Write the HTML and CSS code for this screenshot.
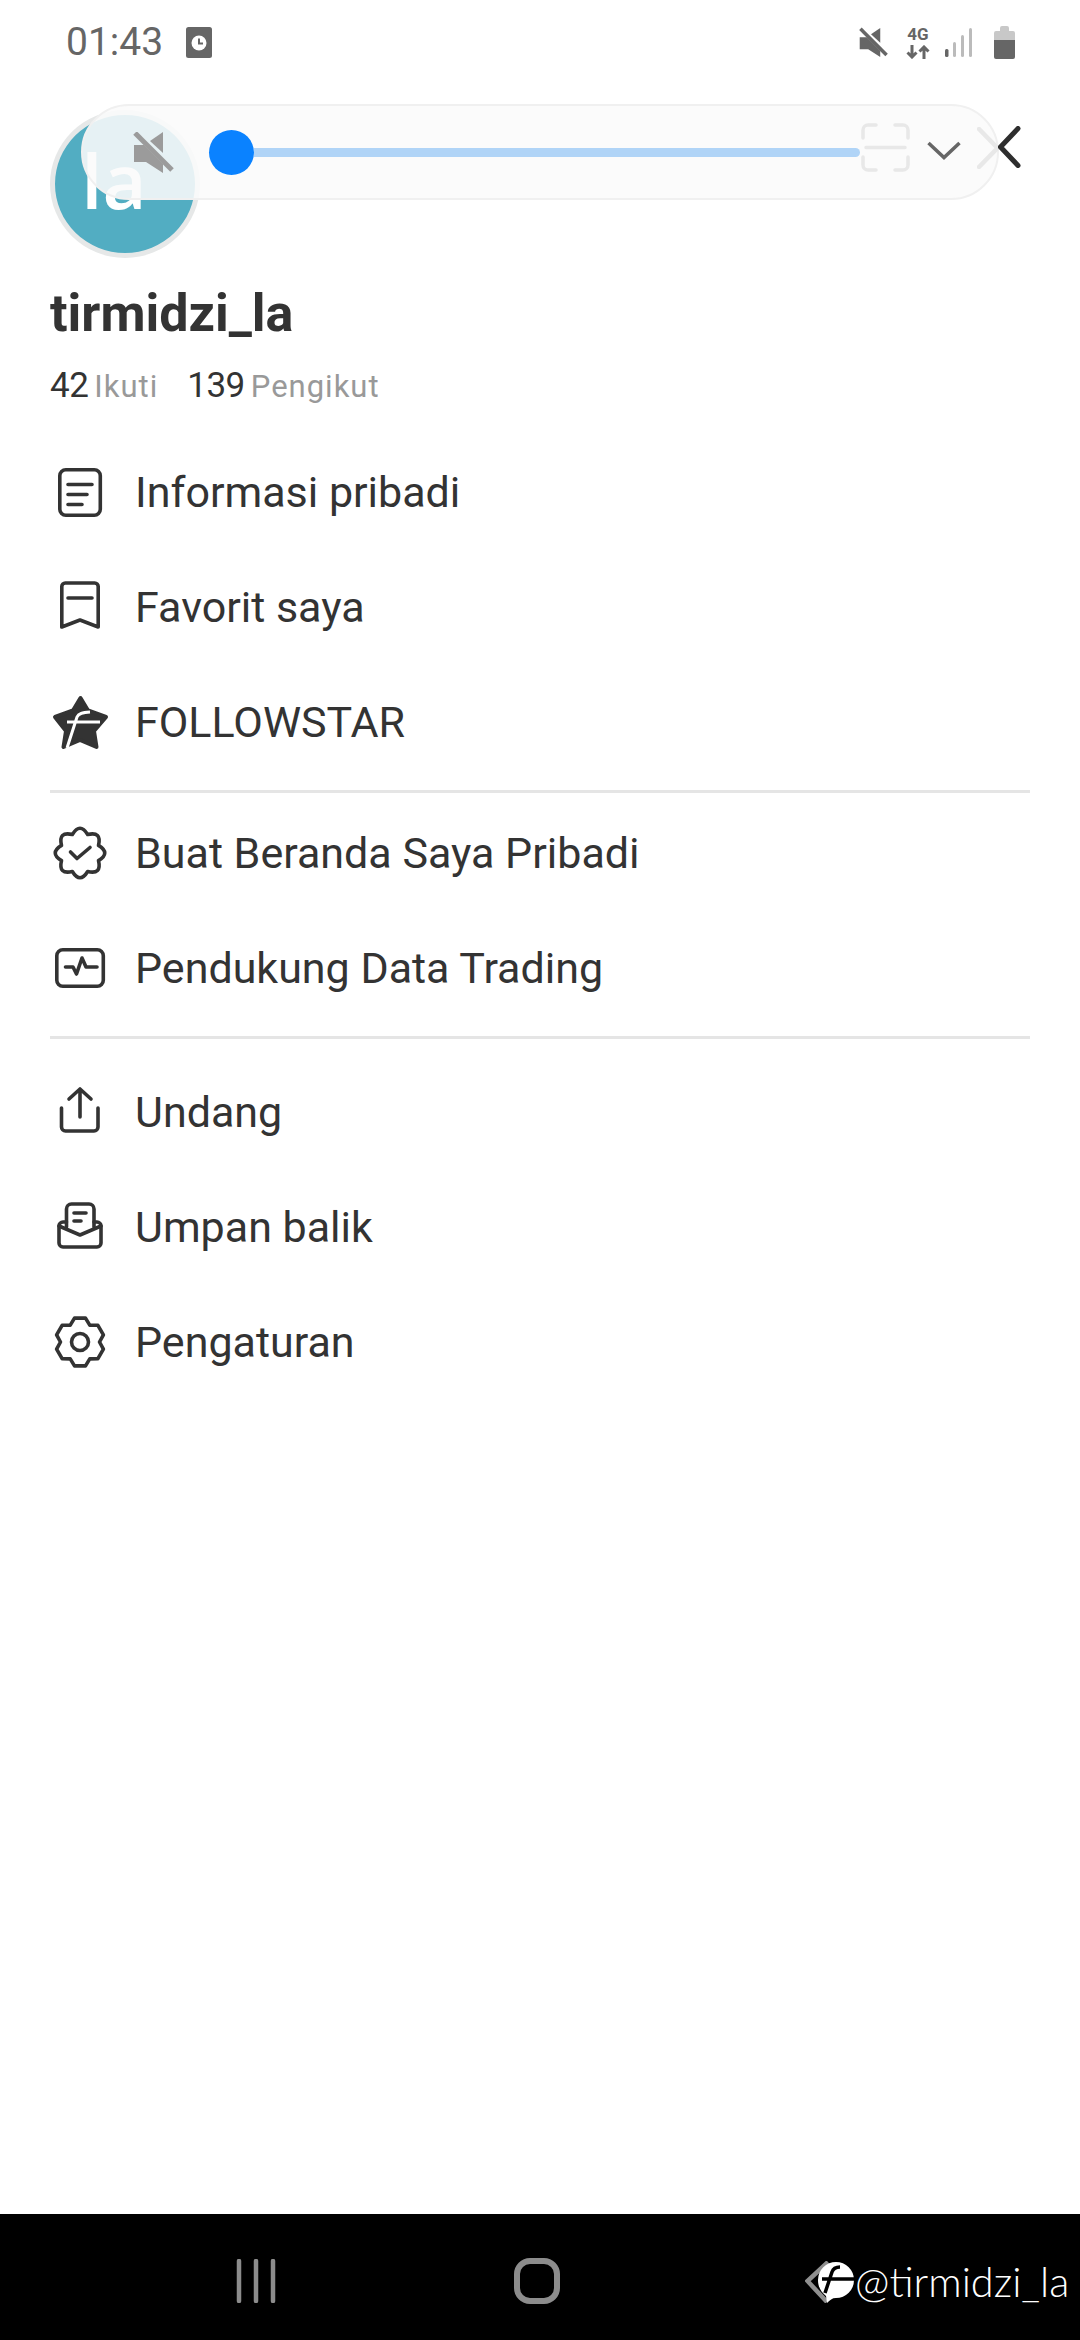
FILE: index.html
```html
<!DOCTYPE html>
<html lang="id">
<head>
<meta charset="utf-8">
<title>tirmidzi_la</title>
<link rel="stylesheet" href="styles.css">
</head>
<body>
<div class="app">
  <header class="status">
    <div class="status-left">
      <span class="time">01:43</span>
      <svg class="clock-box" viewBox="0 0 26 31"><rect width="26" height="31" rx="2.5" fill="#666"/><circle cx="13" cy="16" r="7.5" fill="#fff"/><path d="M13 11.500V16.500H17" fill="none" stroke="#666" stroke-width="2"/></svg>
    </div>
    <div class="status-right">
      <svg class="st-mute" viewBox="0 0 41 41"><path d="M1 13H11L30 32V41L13 30H1Z" fill="#666"/><path d="M17 9 30 0V21Z" fill="#666"/><path d="M2 1 39 38" stroke="#666" stroke-width="5"/></svg>
      <div class="net">
        <span class="net-label">4G</span>
        <svg class="net-arrows" viewBox="0 0 24 14"><path d="M6 0V12M1.500 7.500 6 12 10.500 7.500M18 14V2M13.500 6.500 18 2 22.500 6.500" fill="none" stroke="#666" stroke-width="3"/></svg>
      </div>
      <svg class="signal" viewBox="0 0 27 29"><rect x="0" y="21" width="3.500" height="8" rx="1.500" fill="#666"/><rect x="8" y="14" width="3" height="15" rx="1.500" fill="#bbb"/><rect x="16" y="7" width="3" height="22" rx="1.500" fill="#bbb"/><rect x="24" y="0" width="3" height="29" rx="1.500" fill="#bbb"/></svg>
      <svg class="battery" viewBox="0 0 21 33"><path d="M6 2a2 2 0 0 1 2-2h5a2 2 0 0 1 2 2v3h4a2 2 0 0 1 2 2v7H0V7a2 2 0 0 1 2-2h4Z" fill="#c8c8c8"/><path d="M0 14H21V31a2 2 0 0 1-2 2H2a2 2 0 0 1-2-2Z" fill="#666"/></svg>
    </div>
  </header>

  <main class="content">
    <section class="hero">
      <div class="avatar"><span class="avatar-text">la</span></div>
      <h1 class="name">tirmidzi_la</h1>
      <div class="stats">
        <span class="count">42</span><span class="stat-label">Ikuti</span>
        <span class="count count-second">139</span><span class="stat-label">Pengikut</span>
      </div>

      <div class="player">
        <svg class="pl-mute" viewBox="0 0 41 41"><path d="M1 13H11L30 32V41L13 30H1Z" fill="#9b9b9b"/><path d="M17 9 30 0V21Z" fill="#9b9b9b"/><path d="M2 1 39 38" stroke="#9b9b9b" stroke-width="5"/></svg>
        <div class="slider"><span class="thumb"></span><span class="track"></span></div>
        <svg class="pl-scan" viewBox="0 0 49 49"><path d="M2 15V7a5 5 0 0 1 5-5h8M34 2h8a5 5 0 0 1 5 5v8M2 34v8a5 5 0 0 0 5 5h8M34 47h8a5 5 0 0 0 5-5v-8M5 24.500H44" fill="none" stroke="#e8e8e8" stroke-width="3.500" stroke-linecap="round"/></svg>
        <svg class="pl-chev" viewBox="0 0 34 19"><path d="M1.500 2 17 16.500 32.500 2" fill="none" stroke="#666" stroke-width="3.500"/></svg>
        <svg class="pl-close" viewBox="0 0 22 42"><path d="M2 2 20.500 21 2 40" fill="none" stroke="#e8e8e8" stroke-width="4.500" stroke-linecap="round"/></svg>
      </div>
      <svg class="back" viewBox="0 0 23 42"><path d="M20 2.500 2.500 21 20 39.500" fill="none" stroke="#2e2e2e" stroke-width="5" stroke-linecap="round"/></svg>
    </section>

    <ul class="menu">
      <li class="row">
        <svg class="ico" viewBox="0 0 64 64"><rect x="11.800" y="9.800" width="40.500" height="45.500" rx="6"/><path d="M20 24.500H44M20 34.500H39M20 44.500H34"/></svg>
        <span class="label">Informasi pribadi</span>
      </li>
      <li class="row">
        <svg class="ico" viewBox="0 0 64 64"><path d="M13.800 11.500a3.500 3.500 0 0 1 3.500-3.500H46.700a3.500 3.500 0 0 1 3.500 3.500V52L32 45 13.800 52Z"/><path d="M20 23H44"/></svg>
        <span class="label">Favorit saya</span>
      </li>
      <li class="row">
        <svg class="ico" viewBox="0 0 64 64"><path class="solid" d="M32.500 8 40 20.500 58 27 46 41 48.500 57 32 50 15.500 57 18 41 7 27 25 20.500Z"/><path class="cut" d="M19 58 29 27C30.500 23.500 34 22.500 42 22M19 32H52"/></svg>
        <span class="label">FOLLOWSTAR</span>
      </li>
    </ul>
    <hr class="rule">
    <ul class="menu">
      <li class="row">
        <svg class="ico" viewBox="0 0 64 64"><path d="M24.350 13.500Q32 1 39.650 13.500 53.900 10.100 50.500 24.350 63 32 50.500 39.650 53.900 53.900 39.650 50.500 32 63 24.350 50.500 10.100 53.900 13.500 39.650 1 32 13.500 24.350 10.100 10.100 24.350 13.500Z"/><path d="M22.500 31 29 37.500 42 26.500"/></svg>
        <span class="label">Buat Beranda Saya Pribadi</span>
      </li>
      <li class="row">
        <svg class="ico" viewBox="0 0 64 64"><rect x="8.800" y="13.800" width="46.500" height="36.500" rx="6"/><path d="M17.500 31H25L28.500 38 34 22 38 31H49"/></svg>
        <span class="label">Pendukung Data Trading</span>
      </li>
    </ul>
    <hr class="rule rule-second">
    <ul class="menu">
      <li class="row">
        <svg class="ico" viewBox="0 0 64 64"><path d="M13.500 28V47a4 4 0 0 0 4 4H46a4 4 0 0 0 4-4V28"/><path d="M32 9V37M21 19 32 9 43 19"/></svg>
        <span class="label">Undang</span>
      </li>
      <li class="row">
        <svg class="ico" viewBox="0 0 64 64"><path d="M18.500 32V14a5 5 0 0 1 5-5H41a5 5 0 0 1 5 5V32"/><path d="M18.500 27H15a4 4 0 0 0-4 4V48a4 4 0 0 0 4 4H49a4 4 0 0 0 4-4V31a4 4 0 0 0-4-4H46"/><path d="M11 31 32 40 53 31M26 18H38M26 26H33"/></svg>
        <span class="label">Umpan balik</span>
      </li>
      <li class="row">
        <svg class="ico" viewBox="0 0 64 64"><path d="M37.500 8.100 41.750 15.100 49.900 15.300 55.400 24.800 51.500 32 55.400 39.200 49.900 48.700 41.750 48.900 37.500 55.900H26.500L22.250 48.900 14.100 48.700 8.600 39.200 12.500 32 8.600 24.800 14.100 15.300 22.250 15.100 26.500 8.100Z"/><circle cx="32" cy="32" r="8.500"/></svg>
        <span class="label">Pengaturan</span>
      </li>
    </ul>
  </main>

  <footer class="nav">
    <svg class="nav-recent" viewBox="0 0 40 44"><path d="M3 2V42M20 2V42M37 2V42" stroke="#8c8c8c" stroke-width="4.500" stroke-linecap="round"/></svg>
    <svg class="nav-home" viewBox="0 0 46 46"><rect x="3" y="3" width="40" height="40" rx="13" fill="none" stroke="#8c8c8c" stroke-width="6"/></svg>
    <div class="mark">
      <svg class="mark-logo" viewBox="0 0 49 42"><path d="M23 1 2.500 20 22 41" fill="none" stroke="#8f8f8f" stroke-width="4.500"/><path d="M31 1A18 18 0 0 1 31 37C27 37 25 39 22 42L21 35C16 31 13 26 13 19A18 18 0 0 1 31 1Z" fill="#fff"/><path d="M20 32 27 11C28 8 31 6 35 6M17 18H49" fill="none" stroke="#000" stroke-width="3.500"/></svg>
      <span class="mark-text">@tirmidzi_la</span>
    </div>
  </footer>
</div>
</body>
</html>
```
FILE: styles.css
```css
* { box-sizing: border-box; }
html, body { margin: 0; padding: 0; background: #fff; }
body { font-family: Roboto, "Liberation Sans", sans-serif; color: #333; }
.app { width: 1080px; height: 2340px; display: flex; flex-direction: column; overflow: hidden; }

.status { height: 84px; flex: none; display: flex; justify-content: space-between; align-items: center; padding: 0 65px 0 66px; }
.status-left { display: flex; align-items: center; gap: 23px; }
.time { font-size: 39px; line-height: 44px; color: #666; }
.clock-box { width: 26px; height: 31px; }
.status-right { display: flex; align-items: center; }
.st-mute { width: 29px; height: 31px; }
.net { width: 24px; margin-left: 18px; display: flex; flex-direction: column; align-items: center; }
.net-label { font-size: 17px; line-height: 17px; font-weight: 700; color: #666; }
.net-arrows { width: 24px; height: 14px; margin-top: 2px; }
.signal { width: 27px; height: 29px; margin-left: 15px; }
.battery { width: 21px; height: 33px; margin-left: 22px; }

.content { flex: 1; min-height: 0; }
.hero { position: relative; padding: 26px 0 0 50px; }
.avatar { width: 150px; height: 148px; border-radius: 50%; border: 5px solid #e6e8e8; background: #52adc2; display: flex; align-items: center; justify-content: center; padding: 0 22px 8px 0; }
.avatar-text { font-family: "Open Sans", sans-serif; font-weight: 600; font-size: 76px; line-height: 80px; color: #fff; }
.name { margin: 26px 0 0; font-size: 52px; line-height: 60px; font-weight: 700; color: #333; }
.stats { display: flex; align-items: baseline; margin-top: 22px; height: 40px; }
.count { font-size: 35px; line-height: 40px; color: #333; letter-spacing: -0.5px; }
.count-second { margin-left: 29px; }
.stat-label { font-size: 31px; line-height: 40px; color: #999; margin-left: 6px; letter-spacing: 1px; }

.player { position: absolute; left: 81px; top: 20px; width: 918px; height: 96px; border-radius: 48px; border: 2px solid #f0f0f0; background: rgba(250, 251, 251, 0.88); display: flex; align-items: center; padding-left: 50px; }
.pl-mute { width: 41px; height: 41px; flex: none; }
.slider { display: flex; align-items: center; margin-left: 35px; width: 651px; flex: none; }
.thumb { width: 45px; height: 45px; border-radius: 50%; background: #0a82ff; flex: none; }
.track { flex: 1; height: 9px; background: #b0d4f7; border-radius: 0 5px 5px 0; }
.pl-scan { width: 49px; height: 49px; flex: none; margin: 0 0 9px 1px; }
.pl-chev { width: 34px; height: 19px; flex: none; margin: 0 0 3px 17px; }
.pl-close { width: 22px; height: 42px; flex: none; margin: 0 0 8px 16px; }
.back { position: absolute; left: 998px; top: 42px; width: 23px; height: 42px; }

.menu { list-style: none; margin: 0; padding: 0; }
.hero + .menu { margin-top: 28px; }
.row { height: 115px; display: flex; align-items: center; padding-left: 48px; gap: 23px; }
.ico { width: 64px; height: 64px; flex: none; fill: none; stroke: #333; stroke-width: 3.6; stroke-linecap: round; stroke-linejoin: round; }
.ico .solid { fill: #333; stroke: #333; stroke-width: 4; }
.ico .cut { stroke: #fff; stroke-width: 3; stroke-linecap: butt; }
.label { font-size: 43px; line-height: 50px; color: #333; }
.rule { margin: 11px 50px 2px; height: 3px; border: 0; background: #e5e5e5; width: 980px; }
.rule-second { margin-bottom: 15px; }

.nav { height: 126px; flex: none; background: #000; display: flex; align-items: flex-start; padding: 44px 0 0 236px; }
.nav-recent { width: 40px; height: 44px; flex: none; margin-top: 1px; }
.nav-home { width: 46px; height: 46px; flex: none; margin-left: 238px; }
.mark { display: flex; align-items: center; margin-left: 245px; }
.mark-logo { width: 49px; height: 42px; flex: none; margin-top: 2px; }
.mark-text { font-family: Lato, Roboto, sans-serif; font-weight: 300; font-size: 41.5px; line-height: 46px; color: #fff; margin-left: 1px; white-space: nowrap; }
```
